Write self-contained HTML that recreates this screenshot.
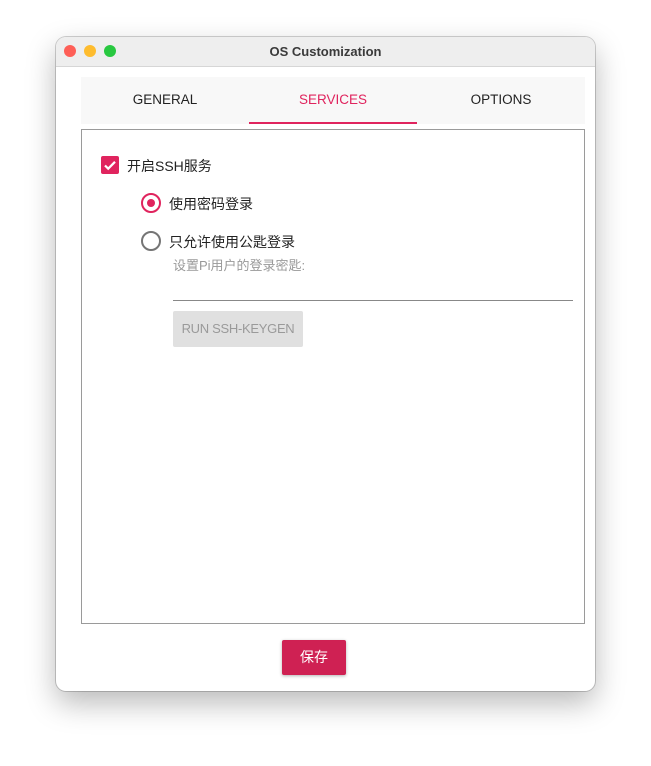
<!DOCTYPE html>
<html><head><meta charset="utf-8"><style>
body{margin:0;width:651px;height:766px;background:#fff;font-family:"Liberation Sans","Noto Sans CJK SC",sans-serif;position:relative;overflow:hidden}
.win{position:absolute;left:56px;top:37px;width:539px;height:654px;border-radius:10px;background:#fff;box-shadow:0 12px 30px rgba(0,0,0,.28),0 0 0 1px rgba(0,0,0,.18);overflow:hidden}
.tb{height:29px;background:#eeeeee;border-bottom:1px solid #d6d6d6;text-align:center;font-weight:bold;font-size:13px;line-height:29px;color:#3a3a3a}
.dot{position:absolute;top:8px;width:12px;height:12px;border-radius:50%}
.tabs{position:absolute;left:25px;top:40px;width:504px;height:47px;background:#f8f8f8}
.tab{position:absolute;top:0;width:168px;height:47px;text-align:center;line-height:46px;font-size:13.5px;color:#222}
.box{position:absolute;left:25px;top:92px;width:502px;height:493px;border:1px solid #9a9a9a}
.t{position:absolute;font-size:14px;color:#222;white-space:nowrap}
</style></head><body>
<div class="win">
<div class="tb">OS Customization</div>
<div class="dot" style="left:8px;background:#fe5f57"></div>
<div class="dot" style="left:28px;background:#febc2e"></div>
<div class="dot" style="left:48px;background:#28c840"></div>
<div class="tabs">
<div class="tab" style="left:0">GENERAL</div>
<div class="tab" style="left:168px;color:#e0245e">SERVICES<div style="position:absolute;left:0;right:0;bottom:0;height:2px;background:#e0245e"></div></div>
<div class="tab" style="left:336px">OPTIONS</div>
</div>
<div class="box">
<div style="position:absolute;left:19px;top:26px;width:18px;height:18px;background:#e0245e;border-radius:2px"><svg width="18" height="18"><path d="M4 9.5l3.2 3.2L14 5.8" stroke="#fff" stroke-width="2.2" fill="none"/></svg></div>
<div class="t" style="left:45px;top:26px">开启SSH服务</div>
<div style="position:absolute;left:59px;top:63px;width:16px;height:16px;border:2px solid #e0245e;border-radius:50%"><div style="position:absolute;left:4px;top:4px;width:8px;height:8px;border-radius:50%;background:#e0245e"></div></div>
<div class="t" style="left:87px;top:64px">使用密码登录</div>
<div style="position:absolute;left:59px;top:101px;width:16px;height:16px;border:2px solid #757575;border-radius:50%"></div>
<div class="t" style="left:87px;top:102px">只允许使用公匙登录</div>
<div class="t" style="left:91px;top:125px;font-size:13px;color:#999">设置Pi用户的登录密匙:</div>
<div style="position:absolute;left:91px;top:170px;width:400px;height:1px;background:#888"></div>
<div style="position:absolute;left:91px;top:181px;width:130px;height:36px;background:#e0e0e0;border-radius:2px;color:#9a9a9a;font-size:13px;letter-spacing:-0.3px;text-align:center;line-height:36px">RUN SSH-KEYGEN</div>
</div>
<div style="position:absolute;left:226px;top:603px;width:64px;height:35px;background:#cf2153;border-radius:2px;color:#fff;font-size:14px;text-align:center;line-height:35px;box-shadow:0 1px 3px rgba(0,0,0,.3)">保存</div>
</div>
</body></html>
